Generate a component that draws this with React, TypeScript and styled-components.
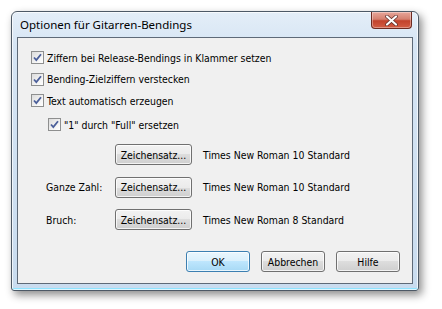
import styled, { createGlobalStyle } from "styled-components";

const GlobalStyle = createGlobalStyle`
    html, body {
        margin: 0;
        background: #ffffff;
    }
    body {
        font-family: 'DejaVu Sans', 'Liberation Sans', sans-serif;
        font-stretch: condensed;
        font-size: 10.4px;
        color: #000000;
    }
`;

const Page = styled.div`
    width: 442px;
    height: 309px;
    padding: 11px 0 0 11px;
    box-sizing: border-box;
`;

const Window = styled.div`
    width: 408px;
    height: 280px;
    box-sizing: border-box;
    display: flex;
    flex-direction: column;
    padding: 0 5px 6px 5px;
    border: 1px solid #4d5966;
    border-radius: 6px 6px 3px 3px;
    background: linear-gradient(180deg, #e4eef8 0%, #d6e5f4 12%, #c9dcef 100%);
    box-shadow: inset 0 0 0 1px rgba(255, 255, 255, 0.7), inset 0 -2px 0 #8fe3ff,
        3px 4px 9px rgba(0, 0, 0, 0.45);
`;

const TitleBar = styled.div`
    height: 25px;
    flex: none;
    display: flex;
    align-items: flex-start;
    justify-content: space-between;
`;

const Title = styled.span`
    font-family: 'Noto Sans', 'Open Sans', sans-serif;
    font-stretch: normal;
    font-size: 11.5px;
    line-height: 14px;
    padding: 6px 0 0 3px;
    color: #000000;
`;

const CloseButton = styled.div`
    width: 41px;
    height: 17px;
    margin-right: 1px;
    box-sizing: border-box;
    border: 1px solid #6d2a21;
    border-top: none;
    border-radius: 0 0 4px 4px;
    background: linear-gradient(180deg, #e7a69a 0%, #d4806f 45%, #c2422c 55%, #d35d44 100%);
    display: flex;
    align-items: center;
    justify-content: center;
    box-shadow: inset 0 0 0 1px rgba(255, 255, 255, 0.35);
`;

const Client = styled.div`
    flex: 1;
    box-sizing: border-box;
    border: 1px solid #5e6a78;
    background: #f0f0f0;
    display: flex;
    flex-direction: column;
    padding: 13px 12px 11px 13px;
`;

const CheckRow = styled.label<{ $indent?: boolean }>`
    display: flex;
    align-items: center;
    gap: 3px;
    height: 13px;
    margin-left: ${(p) => (p.$indent ? "17px" : "0")};
    margin-top: ${(p) => (p.$indent ? "2.5px" : "0")};
    margin-bottom: ${(p) => (p.$indent ? "13px" : "8.5px")};
`;

const Box = styled.span`
    width: 13px;
    height: 13px;
    box-sizing: border-box;
    border: 1px solid #8e8f8f;
    background: linear-gradient(135deg, #dcdcdc 0%, #f6f6f6 70%, #ffffff 100%);
    display: flex;
    align-items: center;
    justify-content: center;
    flex: none;
`;

const FontRow = styled.div`
    display: grid;
    grid-template-columns: 69px 77px auto;
    align-items: center;
    margin-left: 15px;
    margin-bottom: 11.5px;
`;

const Button = styled.button<{ $default?: boolean }>`
    height: 21px;
    box-sizing: border-box;
    padding: 0;
    font: inherit;
    color: #000000;
    border-radius: 3px;
    border: 1px solid ${(p) => (p.$default ? "#3c7fb1" : "#707070")};
    background: ${(p) =>
        p.$default
            ? "linear-gradient(180deg, #eaf6fd 0%, #d9f0fc 50%, #bee6fd 50%, #a7d9f5 100%)"
            : "linear-gradient(180deg, #f2f2f2 0%, #ebebeb 50%, #dddddd 50%, #cfcfcf 100%)"};
    box-shadow: inset 0 0 0 1px rgba(255, 255, 255, 0.75);
`;

const FontButton = styled(Button)`
    width: 77px;
`;

const FontName = styled.span`
    padding-left: 11px;
`;

const Footer = styled.div`
    margin-top: auto;
    display: flex;
    justify-content: flex-end;
    gap: 11px;
`;

const FooterButton = styled(Button)`
    width: 64px;
`;

function Check() {
    return (
        <svg width="9" height="9" viewBox="0 0 9 9">
            <path d="M1 4.5 L3.3 7 L8 1.2" fill="none" stroke="#4b5f9a" strokeWidth="1.8" />
        </svg>
    );
}

function CloseGlyph() {
    return (
        <svg width="13" height="11" viewBox="0 0 13 11">
            <path d="M2 1.5 L11 9.5 M11 1.5 L2 9.5" stroke="#5a2a26" strokeWidth="3.6" strokeLinecap="round" />
            <path d="M2 1.5 L11 9.5 M11 1.5 L2 9.5" stroke="#ffffff" strokeWidth="2.2" strokeLinecap="round" />
        </svg>
    );
}

const checks = [
    "Ziffern bei Release-Bendings in Klammer setzen",
    "Bending-Zielziffern verstecken",
    "Text automatisch erzeugen",
];

const fonts = [
    { label: "", name: "Times New Roman 10 Standard" },
    { label: "Ganze Zahl:", name: "Times New Roman 10 Standard" },
    { label: "Bruch:", name: "Times New Roman 8 Standard" },
];

export default function App() {
    return (
        <Page>
            <GlobalStyle />
            <Window>
                <TitleBar>
                    <Title>Optionen für Gitarren-Bendings</Title>
                    <CloseButton>
                        <CloseGlyph />
                    </CloseButton>
                </TitleBar>
                <Client>
                    {checks.map((text) => (
                        <CheckRow key={text}>
                            <Box>
                                <Check />
                            </Box>
                            {text}
                        </CheckRow>
                    ))}
                    <CheckRow $indent>
                        <Box>
                            <Check />
                        </Box>
                        "1" durch "Full" ersetzen
                    </CheckRow>
                    {fonts.map((f, i) => (
                        <FontRow key={i}>
                            <span>{f.label}</span>
                            <FontButton>Zeichensatz...</FontButton>
                            <FontName>{f.name}</FontName>
                        </FontRow>
                    ))}
                    <Footer>
                        <FooterButton $default>OK</FooterButton>
                        <FooterButton>Abbrechen</FooterButton>
                        <FooterButton>Hilfe</FooterButton>
                    </Footer>
                </Client>
            </Window>
        </Page>
    );
}
